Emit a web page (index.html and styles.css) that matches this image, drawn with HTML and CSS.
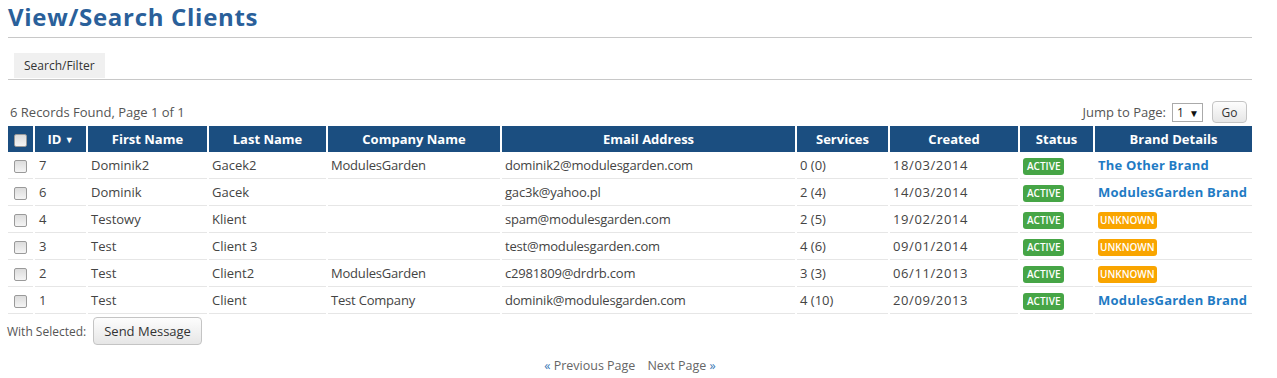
FILE: index.html
```html
<!DOCTYPE html>
<html lang="en">
<head>
    <meta charset="UTF-8">
    <title>View/Search Clients</title>
    <link rel="stylesheet" href="styles.css">
</head>
<body>

<div class="page">
    <h1>View/Search Clients</h1>

    <div class="tabs">
        <span class="tab">Search/Filter</span>
    </div>

    <div class="table-top">
        <span>6 Records Found, Page 1 of 1</span>
        <form class="jump">
            <span>Jump to Page:</span>
            <span class="select">1 <span class="caret">&#9660;</span></span>
            <button type="button" class="btn btn-go">Go</button>
        </form>
    </div>

    <table class="datatable">
        <thead>
            <tr>
                <th class="col-check"><span class="check"></span></th>
                <th class="col-id">ID <span class="sort">&#9660;</span></th>
                <th class="col-first">First Name</th>
                <th class="col-last">Last Name</th>
                <th class="col-company">Company Name</th>
                <th class="col-email">Email Address</th>
                <th class="col-services">Services</th>
                <th class="col-created">Created</th>
                <th class="col-status">Status</th>
                <th class="col-brand">Brand Details</th>
            </tr>
        </thead>
        <tbody>
            <tr>
                <td class="col-check"><span class="check"></span></td>
                <td>7</td>
                <td>Dominik2</td>
                <td>Gacek2</td>
                <td>ModulesGarden</td>
                <td>dominik2@modulesgarden.com</td>
                <td>0 (0)</td>
                <td class="date">18/03/2014</td>
                <td><span class="label active">Active</span></td>
                <td><a href="#" class="brand">The Other Brand</a></td>
            </tr>
            <tr>
                <td class="col-check"><span class="check"></span></td>
                <td>6</td>
                <td>Dominik</td>
                <td>Gacek</td>
                <td></td>
                <td>gac3k@yahoo.pl</td>
                <td>2 (4)</td>
                <td class="date">14/03/2014</td>
                <td><span class="label active">Active</span></td>
                <td><a href="#" class="brand">ModulesGarden Brand</a></td>
            </tr>
            <tr>
                <td class="col-check"><span class="check"></span></td>
                <td>4</td>
                <td>Testowy</td>
                <td>Klient</td>
                <td></td>
                <td>spam@modulesgarden.com</td>
                <td>2 (5)</td>
                <td class="date">19/02/2014</td>
                <td><span class="label active">Active</span></td>
                <td><span class="label unknown">Unknown</span></td>
            </tr>
            <tr>
                <td class="col-check"><span class="check"></span></td>
                <td>3</td>
                <td>Test</td>
                <td>Client 3</td>
                <td></td>
                <td>test@modulesgarden.com</td>
                <td>4 (6)</td>
                <td class="date">09/01/2014</td>
                <td><span class="label active">Active</span></td>
                <td><span class="label unknown">Unknown</span></td>
            </tr>
            <tr>
                <td class="col-check"><span class="check"></span></td>
                <td>2</td>
                <td>Test</td>
                <td>Client2</td>
                <td>ModulesGarden</td>
                <td>c2981809@drdrb.com</td>
                <td>3 (3)</td>
                <td class="date">06/11/2013</td>
                <td><span class="label active">Active</span></td>
                <td><span class="label unknown">Unknown</span></td>
            </tr>
            <tr>
                <td class="col-check"><span class="check"></span></td>
                <td>1</td>
                <td>Test</td>
                <td>Client</td>
                <td>Test Company</td>
                <td>dominik@modulesgarden.com</td>
                <td>4 (10)</td>
                <td class="date">20/09/2013</td>
                <td><span class="label active">Active</span></td>
                <td><a href="#" class="brand">ModulesGarden Brand</a></td>
            </tr>
        </tbody>
    </table>

    <div class="mass-actions">
        <span>With Selected:</span>
        <button type="button" class="btn">Send Message</button>
    </div>

    <div class="pagination">
        <a href="#"><span class="arrow">&laquo;</span> Previous Page</a>
        <a href="#">Next Page <span class="arrow">&raquo;</span></a>
    </div>
</div>

</body>
</html>
```

FILE: styles.css
```css
body {
    margin: 0;
    padding: 0;
    font-family: "Open Sans", Arial, sans-serif;
    font-size: 13px;
    color: #555;
    background-color: #fff;
}
.page {
    margin-left: 8px;
    width: 1244px;
}
h1 {
    margin: 0;
    padding-top: 1px;
    font-size: 24px;
    letter-spacing: 0.7px;
    line-height: 32px;
    font-weight: bold;
    color: #2a609a;
    border-bottom: 1px solid #c8c8c8;
    height: 36px;
}
.tabs {
    padding: 15px 0 0 6px;
    border-bottom: 1px solid #c8c8c8;
    height: 26px;
    display: flex;
    align-items: flex-end;
}
.tab {
    display: block;
    background-color: #f0f0f0;
    padding: 0 10px;
    height: 25px;
    line-height: 26px;
    font-size: 12px;
    color: #333;
    margin-bottom: 1px;
}
.table-top {
    display: flex;
    justify-content: space-between;
    align-items: center;
    height: 24px;
    margin-top: 20px;
    padding-left: 2px;
}
.jump {
    display: flex;
    align-items: center;
    margin: 0;
    padding-right: 5px;
}
.select {
    display: inline-block;
    width: 31px;
    height: 19px;
    box-sizing: border-box;
    border: 1px solid #aaa;
    margin-left: 6px;
    padding-left: 4px;
    line-height: 17px;
    font-size: 12px;
    color: #222;
    background-color: #fff;
}
.caret {
    font-size: 10px;
    margin-left: 2px;
    color: #111;
}
.btn {
    font-family: "Open Sans", Arial, sans-serif;
    font-size: 13px;
    color: #333;
    border: 1px solid #c4c4c4;
    border-radius: 4px;
    background: linear-gradient(#fdfdfd, #e6e6e6);
    padding: 0 10px;
    cursor: pointer;
}
.btn-go {
    margin-left: 9px;
    height: 22px;
    width: 35px;
    padding: 0;
    font-size: 12px;
}
.datatable {
    border-collapse: separate;
    border-spacing: 2px 0;
    margin: 2px 0 0 -2px;
    width: 1248px;
    table-layout: fixed;
}
.datatable th {
    background-color: #1b4e80;
    color: #fff;
    font-weight: bold;
    height: 26px;
    padding: 0;
    text-align: center;
}
.datatable td {
    height: 26px;
    padding: 0 0 0 3px;
    border-bottom: 1px solid #e6e6e6;
    color: #444;
    white-space: nowrap;
}
.datatable td:nth-child(2) {
    padding-left: 4px;
}
.datatable td:nth-child(5),
.datatable td:nth-child(6) {
    letter-spacing: -0.2px;
}
.col-check { width: 25px; }
.col-id { width: 51px; }
.col-first { width: 119px; }
.col-last { width: 117px; }
.col-company { width: 172px; }
.col-email { width: 293px; }
.col-services { width: 91px; }
.col-created { width: 128px; }
.col-status { width: 73px; }
.datatable td.col-check {
    padding: 0;
    text-align: center;
}
.check {
    display: inline-block;
    width: 11px;
    height: 11px;
    border: 1px solid #9a9a9a;
    border-radius: 2px;
    background: linear-gradient(#dcdcdc, #f4f4f4);
    vertical-align: middle;
}
.sort {
    font-size: 9px;
    vertical-align: 1px;
}
.date {
    color: #666;
    letter-spacing: 0.6px;
}
.label {
    display: inline-block;
    color: #fff;
    font-size: 10px;
    font-weight: 600;
    text-transform: uppercase;
    line-height: 17px;
    height: 17px;
    padding: 0 3px;
    border-radius: 3px;
    vertical-align: middle;
}
.label.active {
    background-color: #46a546;
    padding: 0 4px;
}
.label.unknown {
    background-color: #f9a500;
    padding: 0 2px;
}
.brand {
    color: #1f7bc4;
    font-weight: bold;
    text-decoration: none;
    letter-spacing: 0.2px;
}
.mass-actions {
    display: flex;
    align-items: center;
    margin: 3px 0 0 -1px;
    font-size: 12px;
}
.mass-actions .btn {
    margin-left: 7px;
    height: 28px;
    padding: 0 10px;
}
.pagination {
    display: flex;
    justify-content: center;
    gap: 12px;
    margin-top: 12px;
    padding-left: 0;
    font-size: 12.5px;
}
.pagination a {
    color: #666;
    text-decoration: none;
}
.arrow {
    color: #3a78b4;
}
```
